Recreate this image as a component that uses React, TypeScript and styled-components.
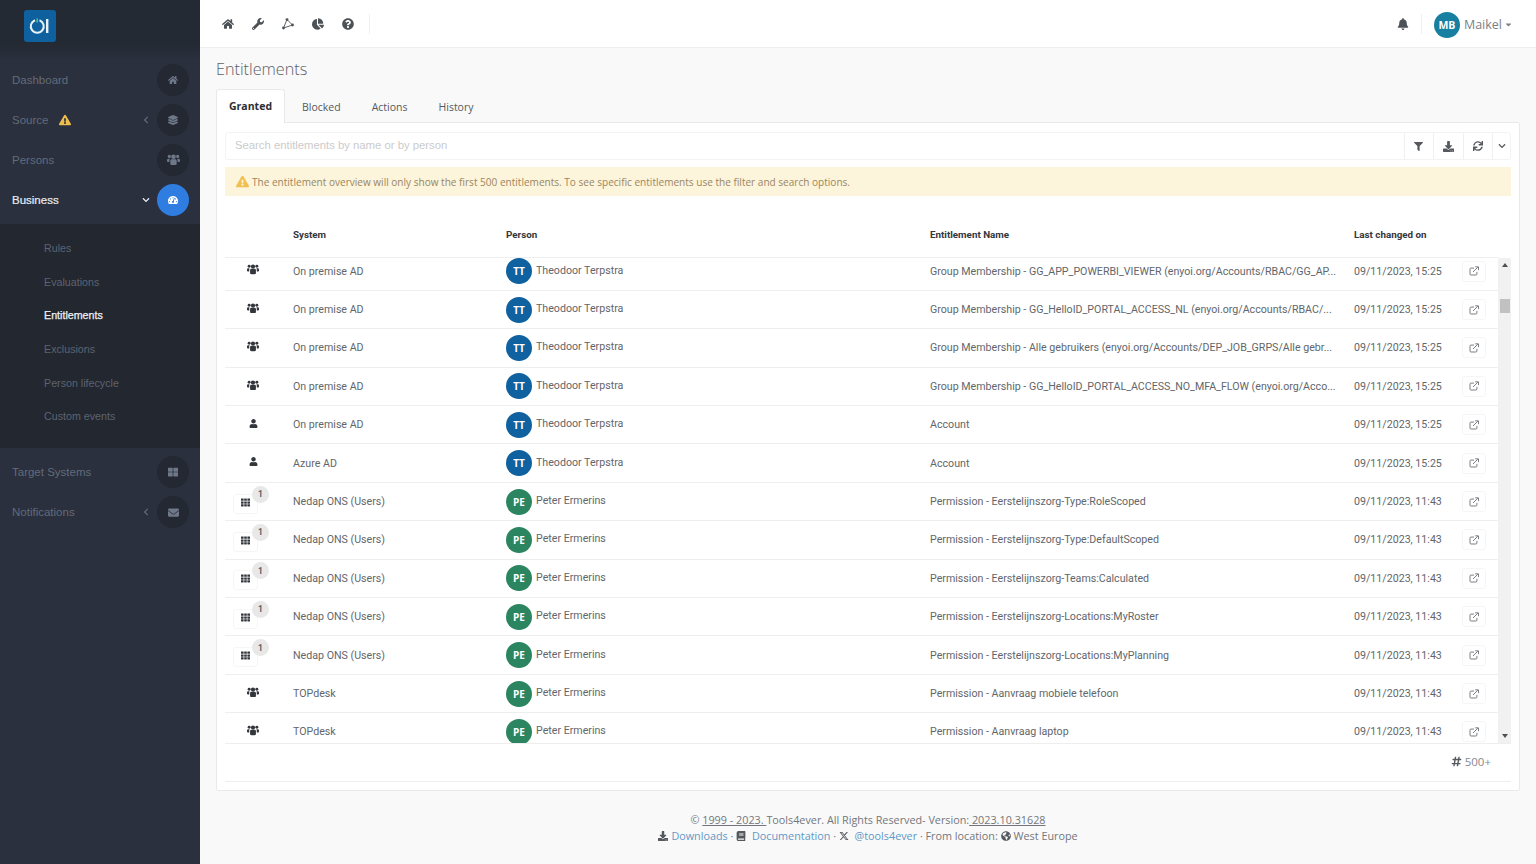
import React from "react";
import styled, { createGlobalStyle } from "styled-components";
import {
  FaHome, FaWrench, FaChartPie, FaQuestionCircle, FaBell, FaFilter, FaDownload, FaSync,
  FaChevronDown, FaChevronLeft, FaHashtag, FaTh, FaThLarge, FaLayerGroup, FaEnvelope, FaExclamationTriangle,
  FaGlobeAmericas, FaBook, FaUser, FaTachometerAlt, FaCaretDown,
} from "react-icons/fa";
import { FaXTwitter } from "react-icons/fa6";

const Global = createGlobalStyle`
  html, body { margin: 0; padding: 0; height: 100%; overflow: hidden; background: #f9f9f9; }
  * { box-sizing: border-box; }
`;

const Shell = styled.div`
  display: flex;
  width: 1536px;
  height: 864px;
  overflow: hidden;
  font-family: "Open Sans", sans-serif;
`;
const Sidebar = styled.aside`
  width: 200px;
  flex: none;
  background: #2a303d;
  font-family: "Liberation Sans", Arial, sans-serif;
`;
const Brand = styled.div`
  height: 60px;
  padding: 10px 0 0 24px;
  background: linear-gradient(#242a34, #242a34 44px, #2a303d);
`;
const NavList = styled.nav`
  display: flex;
  flex-direction: column;
`;
const NavItem = styled.div`
  height: 40px;
  display: flex;
  align-items: center;
  padding: 0 11px 0 12px;
  font-size: 11.5px;
  color: ${p => (p.$active ? "#e8ecf2" : "#636b7a")};
  -webkit-text-stroke: ${p => (p.$active ? "0.2px" : "0")};
`;
const NavLabel = styled.span`
  flex: 1;
  display: flex;
  align-items: center;
  gap: 11px;
`;
const NavChevron = styled.span`
  width: 22px;
  display: flex;
  font-size: 8px;
  color: ${p => (p.$active ? "#e8ecf2" : "#636b7a")};
  padding-left: 7px;
`;
const NavCircle = styled.span`
  width: 32px;
  height: 32px;
  border-radius: 50%;
  display: flex;
  align-items: center;
  justify-content: center;
  background: ${p => (p.$active ? "#2f7de1" : "#232832")};
  color: ${p => (p.$active ? "#ffffff" : "#6f7888")};
  font-size: ${p => p.$size || 10}px;
`;
const SubMenu = styled.div`
  margin-top: 4px;
  margin-bottom: 4px;
  height: 224px;
  padding-top: 7px;
  background: #23272f;
  display: flex;
  flex-direction: column;
`;
const SubItem = styled.div`
  height: 33.7px;
  display: flex;
  align-items: center;
  padding-left: 44px;
  font-size: 10.7px;
  color: ${p => (p.$active ? "#eef1f5" : "#5c6472")};
  -webkit-text-stroke: ${p => (p.$active ? "0.25px" : "0")};
`;
const Warn = styled.span`
  color: #eebd4d;
  font-size: 12px;
  display: flex;
`;

const Main = styled.main`
  flex: 1;
  min-width: 0;
  display: flex;
  flex-direction: column;
`;
const Topbar = styled.header`
  height: 48px;
  flex: none;
  display: flex;
  align-items: center;
  background: #ffffff;
  border-bottom: 1px solid #efefef;
  padding: 0 23px 0 13px;
`;
const TopIcon = styled.span`
  width: 30px;
  display: flex;
  justify-content: center;
  font-size: 12px;
  color: #4d5257;
`;
const VDivider = styled.span`
  width: 1px;
  height: 20px;
  background: #f1f1f1;
  margin-left: ${p => p.$ml || 0}px;
`;
const Spacer = styled.span`
  flex: 1;
`;
const UserAvatar = styled.span`
  width: 26px;
  height: 26px;
  border-radius: 50%;
  margin: 2px 0 0 12px;
  background: #177f9f;
  color: #fff;
  font-size: 10.5px;
  font-weight: 700;
  display: flex;
  align-items: center;
  justify-content: center;
`;
const UserName = styled.span`
  margin: 2px 0 0 4px;
  font-size: 12.5px;
  color: #7b7f85;
`;
const Caret = styled.span`
  display: flex;
  margin: 2px 0 0 2px;
  font-size: 9px;
  color: #7b7f85;
`;
const Content = styled.div`
  flex: 1;
  padding: 0 16px;
  display: flex;
  flex-direction: column;
`;
const Title = styled.h1`
  margin: 9px 0 7px;
  height: 25px;
  line-height: 25px;
  font-size: 16.2px;
  font-weight: 300;
  color: #5c6066;
`;
const Tabs = styled.div`
  display: flex;
  height: 33px;
  position: relative;
  z-index: 1;
`;
const Tab = styled.div`
  height: 34px;
  display: flex;
  align-items: center;
  padding: ${p => (p.$active ? "0 12px 2px" : "1px 0 0")};
  margin-right: ${p => (p.$active ? 17 : 31)}px;
  font-size: 10.5px;
  font-weight: ${p => (p.$active ? 700 : 400)};
  color: ${p => (p.$active ? "#2b2e33" : "#55595f")};
  background: ${p => (p.$active ? "#fff" : "transparent")};
  border: ${p => (p.$active ? "1px solid #e9e9e9" : "none")};
  border-bottom: none;
  border-radius: 3px 3px 0 0;
`;
const Panel = styled.section`
  height: 669px;
  background: #fff;
  border: 1px solid #e9e9e9;
  border-radius: 0 2px 2px 2px;
  padding: 9px 8px 0;
  display: flex;
  flex-direction: column;
`;
const SearchBar = styled.div`
  height: 28px;
  flex: none;
  display: flex;
  border: 1px solid #f3f3f3;
  border-radius: 3px;
`;
const SearchText = styled.div`
  flex: 1;
  padding: 0 0 2px 9px;
  display: flex;
  align-items: center;
  font-family: "Liberation Sans", Arial, sans-serif;
  font-size: 11.3px;
  color: #cbcbcb;
`;
const SearchBtn = styled.div`
  width: ${p => p.$w || 29.5}px;
  display: flex;
  align-items: center;
  justify-content: center;
  border-left: 1px solid #f0f0f0;
  font-size: ${p => p.$size || 11}px;
  color: #55595e;
`;
const Alert = styled.div`
  height: 29px;
  flex: none;
  margin-top: 7px;
  padding-left: 11px;
  display: flex;
  align-items: center;
  gap: 3px;
  background: #fdf4dc;
  font-size: 10.05px;
  color: #9a8660;
  svg { color: #f0c050; font-size: 13px; }
`;
const cols = "68px 213px 424px 424px 1fr";
const HeadRow = styled.div`
  height: 62px;
  flex: none;
  display: grid;
  grid-template-columns: ${cols};
  align-items: center;
  padding-top: 15px;
  margin-right: 13px;
  border-bottom: 1px solid #eeeeee;
  font-family: Roboto, sans-serif;
  font-size: 9.8px;
  font-weight: 700;
  color: #33373c;
`;
const HeadCell = styled.span`
  grid-column: ${p => p.$col};
`;
const TableWrap = styled.div`
  height: 486px;
  flex: none;
  display: flex;
  overflow: hidden;
  border-bottom: 1px solid #eeeeee;
`;
const Rows = styled.div`
  flex: 1;
  min-width: 0;
  overflow: hidden;
`;
const RowsInner = styled.div`
  margin-top: -5.6px;
`;
const Row = styled.div`
  height: 38.42px;
  display: grid;
  grid-template-columns: ${cols};
  align-items: center;
  border-bottom: 1px solid #eeeeee;
  font-family: Roboto, sans-serif;
  font-size: 10.65px;
  color: #62666b;
`;
const IconCell = styled.div`
  display: flex;
  justify-content: center;
  font-size: 11px;
  color: #33373c;
  padding-right: 12px;
  margin-top: -3px;
`;
const GridIconWrap = styled.div`
  position: relative;
  width: 25px;
  height: 20px;
  margin: 4px 0 0 8px;
  padding-bottom: 3px;
  border: 1px solid #f6f6f6;
  border-radius: 3px;
  display: flex;
  align-items: center;
  justify-content: center;
  font-size: 9px;
  color: #33373c;
`;
const CountBadge = styled.span`
  position: absolute;
  top: -9px;
  right: -12px;
  width: 17px;
  height: 17px;
  border-radius: 50%;
  background: #e8e8e8;
  color: #5a5e63;
  font-size: 8.5px;
  font-weight: 700;
  display: flex;
  align-items: center;
  justify-content: center;
`;
const CellText = styled.span`
  display: block;
  white-space: nowrap;
`;
const PersonCell = styled.div`
  display: flex;
  align-items: center;
  gap: 4px;
`;
const Avatar = styled.span`
  width: 26px;
  height: 26px;
  flex: none;
  border-radius: 50%;
  background: ${p => p.$color};
  color: #fff;
  font-family: "Open Sans", sans-serif;
  font-size: 10px;
  font-weight: 700;
  display: flex;
  align-items: center;
  justify-content: center;
`;
const PersonName = styled.span`
  margin-bottom: 2px;
`;
const LastCell = styled.div`
  display: flex;
  align-items: center;
`;
const LinkBtn = styled.span`
  width: 24px;
  height: 21px;
  margin-left: 20px;
  border: 1px solid #f6f6f6;
  border-radius: 3px;
  display: flex;
  align-items: center;
  justify-content: center;
  color: #7b7f84;
`;
const Scrollbar = styled.div`
  width: 13px;
  flex: none;
  background: #f1f1f1;
  display: flex;
  flex-direction: column;
  align-items: center;
  justify-content: space-between;
`;
const ScrollArrow = styled.span`
  width: 0;
  height: 0;
  margin: 5px 0;
  border-left: 3px solid transparent;
  border-right: 3px solid transparent;
  border-bottom: ${p => (p.$up ? "4px solid #505050" : "none")};
  border-top: ${p => (p.$up ? "none" : "4px solid #505050")};
`;
const ScrollThumb = styled.span`
  width: 10px;
  height: 14px;
  background: #c1c1c1;
  margin-top: 27px;
`;
const ScrollFill = styled.span`
  flex: 1;
`;
const Count = styled.div`
  height: 38px;
  flex: none;
  border-bottom: 1px solid #eeeeee;
  display: flex;
  align-items: center;
  justify-content: flex-end;
  gap: 3px;
  padding: 0 20px 2px 0;
  font-size: 11.5px;
  color: #85888d;
  svg { color: #55595e; font-size: 11px; }
`;
const Footer = styled.footer`
  padding-top: 21px;
  text-align: center;
  font-size: 10.8px;
  line-height: 16px;
  color: #73777c;
`;
const Under = styled.span`
  text-decoration: underline;
`;
const FootLink = styled.span`
  color: #5f98c6;
`;
const FootIcon = styled.span`
  display: inline-flex;
  vertical-align: -1px;
  font-size: 10px;
  margin-right: 3px;
  color: #55595e;
`;

function Logo() {
  return (
    <svg width="32" height="32" viewBox="0 0 32 32">
      <rect width="32" height="32" rx="3" fill="#0f609f" />
      <path d="M11 10.2 A6.5 6.5 0 1 0 15.5 10.2" fill="none" stroke="#e8f2f8" strokeWidth="2" />
      <path d="M13.2 8.5v4" stroke="#3fc18f" strokeWidth="1.6" />
      <rect x="22" y="9" width="2.4" height="14" fill="#e8f2f8" />
    </svg>
  );
}

function ExtLink() {
  return (
    <svg width="10" height="10" viewBox="0 0 12 12" fill="none" stroke="currentColor" strokeWidth="1.2">
      <path d="M9.5 7v2.6a1.2 1.2 0 0 1-1.2 1.2H2.4a1.2 1.2 0 0 1-1.2-1.2V3.7a1.2 1.2 0 0 1 1.2-1.2H6" />
      <path d="M4.8 7.2 10.6 1.4M7.4 1h4v4" />
    </svg>
  );
}

function GroupIcon({ size = 12 }: { size?: number }) {
  return (
    <svg width={size} height={size * 0.86} viewBox="0 0 14 12" fill="currentColor">
      <circle cx="7" cy="3" r="2.5" />
      <circle cx="2.5" cy="2.6" r="1.7" />
      <circle cx="11.5" cy="2.6" r="1.7" />
      <path d="M3.6 7.2C3.6 6 4.6 5.6 5.2 5.6h3.6c.6 0 1.6.4 1.6 1.6v3.2c0 .9-.8 1.4-1.6 1.4H5.2c-.8 0-1.6-.5-1.6-1.4z" />
      <path d="M2.9 5H1.6C.7 5 0 5.6 0 6.6v1.2c0 .5.4.9 1 .9h1.6V7c0-.8.1-1.5.3-2zM11.1 5h1.3c.9 0 1.6.6 1.6 1.6v1.2c0 .5-.4.9-1 .9h-1.6V7c0-.8-.1-1.5-.3-2z" />
    </svg>
  );
}

function PolygonIcon() {
  return (
    <svg width="12" height="12" viewBox="0 0 12 12" fill="currentColor">
      <path d="M5 1.5 10.5 7 1.5 10z" fill="none" stroke="currentColor" strokeWidth="0.9" />
      <circle cx="5" cy="1.6" r="1.4" />
      <circle cx="10.5" cy="7" r="1.4" />
      <circle cx="1.5" cy="10" r="1.4" />
    </svg>
  );
}

type Kind = "users" | "user" | "grid";
const TT = { name: "Theodoor Terpstra", init: "TT", color: "#0f619f" };
const PE = { name: "Peter Ermerins", init: "PE", color: "#2b8560" };
const d1 = "09/11/2023, 15:25";
const d2 = "09/11/2023, 11:43";
const rows: { k: Kind; s: string; p: typeof TT; e: string; d: string }[] = [
  { k: "users", s: "On premise AD", p: TT, e: "Group Membership - GG_APP_POWERBI_VIEWER (enyoi.org/Accounts/RBAC/GG_AP...", d: d1 },
  { k: "users", s: "On premise AD", p: TT, e: "Group Membership - GG_HelloID_PORTAL_ACCESS_NL (enyoi.org/Accounts/RBAC/...", d: d1 },
  { k: "users", s: "On premise AD", p: TT, e: "Group Membership - Alle gebruikers (enyoi.org/Accounts/DEP_JOB_GRPS/Alle gebr...", d: d1 },
  { k: "users", s: "On premise AD", p: TT, e: "Group Membership - GG_HelloID_PORTAL_ACCESS_NO_MFA_FLOW (enyoi.org/Acco...", d: d1 },
  { k: "user", s: "On premise AD", p: TT, e: "Account", d: d1 },
  { k: "user", s: "Azure AD", p: TT, e: "Account", d: d1 },
  { k: "grid", s: "Nedap ONS (Users)", p: PE, e: "Permission - Eerstelijnszorg-Type:RoleScoped", d: d2 },
  { k: "grid", s: "Nedap ONS (Users)", p: PE, e: "Permission - Eerstelijnszorg-Type:DefaultScoped", d: d2 },
  { k: "grid", s: "Nedap ONS (Users)", p: PE, e: "Permission - Eerstelijnszorg-Teams:Calculated", d: d2 },
  { k: "grid", s: "Nedap ONS (Users)", p: PE, e: "Permission - Eerstelijnszorg-Locations:MyRoster", d: d2 },
  { k: "grid", s: "Nedap ONS (Users)", p: PE, e: "Permission - Eerstelijnszorg-Locations:MyPlanning", d: d2 },
  { k: "users", s: "TOPdesk", p: PE, e: "Permission - Aanvraag mobiele telefoon", d: d2 },
  { k: "users", s: "TOPdesk", p: PE, e: "Permission - Aanvraag laptop", d: d2 },
];

function KindIcon({ k }: { k: Kind }) {
  if (k === "grid")
    return (
      <GridIconWrap>
        <FaTh />
        <CountBadge>1</CountBadge>
      </GridIconWrap>
    );
  return <IconCell>{k === "users" ? <GroupIcon /> : <FaUser size={9} />}</IconCell>;
}

export default function App() {
  return (
    <Shell>
      <Global />
      <Sidebar>
        <Brand><Logo /></Brand>
        <NavList>
          <NavItem><NavLabel>Dashboard</NavLabel><NavCircle><FaHome /></NavCircle></NavItem>
          <NavItem>
            <NavLabel>Source<Warn><FaExclamationTriangle /></Warn></NavLabel>
            <NavChevron><FaChevronLeft /></NavChevron>
            <NavCircle><FaLayerGroup /></NavCircle>
          </NavItem>
          <NavItem><NavLabel>Persons</NavLabel><NavCircle><GroupIcon size={13} /></NavCircle></NavItem>
          <NavItem $active>
            <NavLabel>Business</NavLabel>
            <NavChevron $active><FaChevronDown /></NavChevron>
            <NavCircle $active><FaTachometerAlt /></NavCircle>
          </NavItem>
          <SubMenu>
            <SubItem>Rules</SubItem>
            <SubItem>Evaluations</SubItem>
            <SubItem $active>Entitlements</SubItem>
            <SubItem>Exclusions</SubItem>
            <SubItem>Person lifecycle</SubItem>
            <SubItem>Custom events</SubItem>
          </SubMenu>
          <NavItem><NavLabel>Target Systems</NavLabel><NavCircle><FaThLarge /></NavCircle></NavItem>
          <NavItem>
            <NavLabel>Notifications</NavLabel>
            <NavChevron><FaChevronLeft /></NavChevron>
            <NavCircle $size={11}><FaEnvelope /></NavCircle>
          </NavItem>
        </NavList>
      </Sidebar>
      <Main>
        <Topbar>
          <TopIcon><FaHome /></TopIcon>
          <TopIcon><FaWrench /></TopIcon>
          <TopIcon><PolygonIcon /></TopIcon>
          <TopIcon><FaChartPie /></TopIcon>
          <TopIcon><FaQuestionCircle /></TopIcon>
          <VDivider $ml={6} />
          <Spacer />
          <TopIcon><FaBell /></TopIcon>
          <VDivider $ml={3} />
          <UserAvatar>MB</UserAvatar>
          <UserName>Maikel</UserName>
          <Caret><FaCaretDown /></Caret>
        </Topbar>
        <Content>
          <Title>Entitlements</Title>
          <Tabs>
            <Tab $active>Granted</Tab>
            <Tab>Blocked</Tab>
            <Tab>Actions</Tab>
            <Tab>History</Tab>
          </Tabs>
          <Panel>
            <SearchBar>
              <SearchText>Search entitlements by name or by person</SearchText>
              <SearchBtn><FaFilter size={9} /></SearchBtn>
              <SearchBtn><FaDownload /></SearchBtn>
              <SearchBtn><FaSync size={10} /></SearchBtn>
              <SearchBtn $w={18} $size={8}><FaChevronDown /></SearchBtn>
            </SearchBar>
            <Alert>
              <FaExclamationTriangle />
              The entitlement overview will only show the first 500 entitlements. To see specific entitlements use the filter and search options.
            </Alert>
            <HeadRow>
              <HeadCell $col={2}>System</HeadCell>
              <HeadCell $col={3}>Person</HeadCell>
              <HeadCell $col={4}>Entitlement Name</HeadCell>
              <HeadCell $col={5}>Last changed on</HeadCell>
            </HeadRow>
            <TableWrap>
              <Rows>
                <RowsInner>
                  {rows.map((r, i) => (
                    <Row key={i}>
                      <KindIcon k={r.k} />
                      <CellText>{r.s}</CellText>
                      <PersonCell>
                        <Avatar $color={r.p.color}>{r.p.init}</Avatar>
                        <PersonName>{r.p.name}</PersonName>
                      </PersonCell>
                      <CellText>{r.e}</CellText>
                      <LastCell>
                        {r.d}
                        <LinkBtn><ExtLink /></LinkBtn>
                      </LastCell>
                    </Row>
                  ))}
                </RowsInner>
              </Rows>
              <Scrollbar>
                <ScrollArrow $up />
                <ScrollThumb />
                <ScrollFill />
                <ScrollArrow />
              </Scrollbar>
            </TableWrap>
            <Count><FaHashtag />500+</Count>
          </Panel>
          <Footer>
            <div>© <Under> 1999 - 2023. </Under>Tools4ever. All Rights Reserved- Version:<Under> 2023.10.31628</Under></div>
            <div>
              <FootIcon><FaDownload /></FootIcon><FootLink>Downloads</FootLink> · <FootIcon><FaBook /></FootIcon> <FootLink>Documentation</FootLink> · <FootIcon><FaXTwitter /></FootIcon> <FootLink>@tools4ever</FootLink> · From location: <FootIcon><FaGlobeAmericas /></FootIcon>West Europe
            </div>
          </Footer>
        </Content>
      </Main>
    </Shell>
  );
}
